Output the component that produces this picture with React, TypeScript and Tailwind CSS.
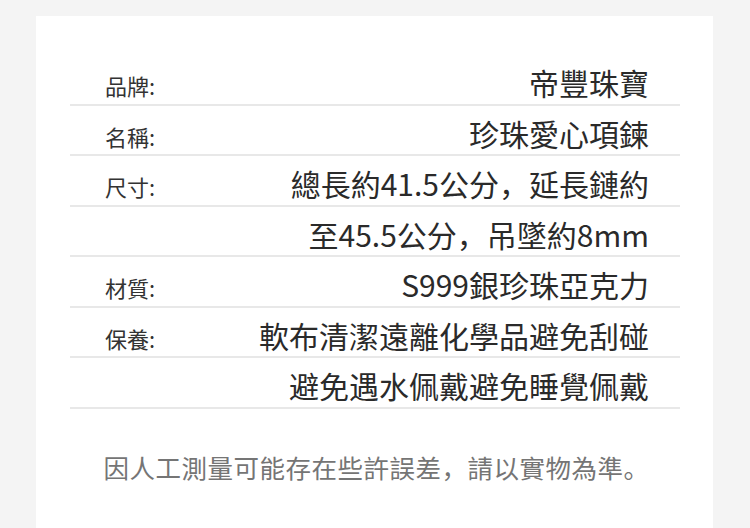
import React from "react";

const rows: { label: string; value: string }[] = [
  { label: "品牌:", value: "帝豐珠寶" },
  { label: "名稱:", value: "珍珠愛心項鍊" },
  { label: "尺寸:", value: "總長約41.5公分，延長鏈約" },
  { label: "", value: "至45.5公分，吊墜約8mm" },
  { label: "材質:", value: "S999銀珍珠亞克力" },
  { label: "保養:", value: "軟布清潔遠離化學品避免刮碰" },
  { label: "", value: "避免遇水佩戴避免睡覺佩戴" },
];

export default function App() {
  return (
    <div
      className="w-[750px] h-[528px] overflow-hidden bg-[#f4f4f4] pt-[16px] pl-[36px]"
      style={{ fontFamily: '"Noto Sans CJK SC", "Noto Sans", sans-serif' }}
    >
      <div className="w-[677px] h-[512px] bg-white pt-[39px]">
        <div className="ml-[34px] w-[610px]">
          {rows.map((r, i) => (
            <div
              key={i}
              className="flex h-[50.5px] items-baseline justify-between border-b-2 border-[#e8e8e8] pl-[35px] pr-[31px] pt-[12px]"
            >
              <span className="text-[22px] leading-[30px] text-[#333333]">{r.label}</span>
              <span className="text-[30px] leading-[30px] text-[#2a2a2a]">{r.value}</span>
            </div>
          ))}
        </div>
        <div className="mt-[45px] pl-[4px] text-center text-[25.5px] leading-[25px] tracking-[0.5px] text-[#757575]">
          因人工測量可能存在些許誤差，請以實物為準。
        </div>
      </div>
    </div>
  );
}
